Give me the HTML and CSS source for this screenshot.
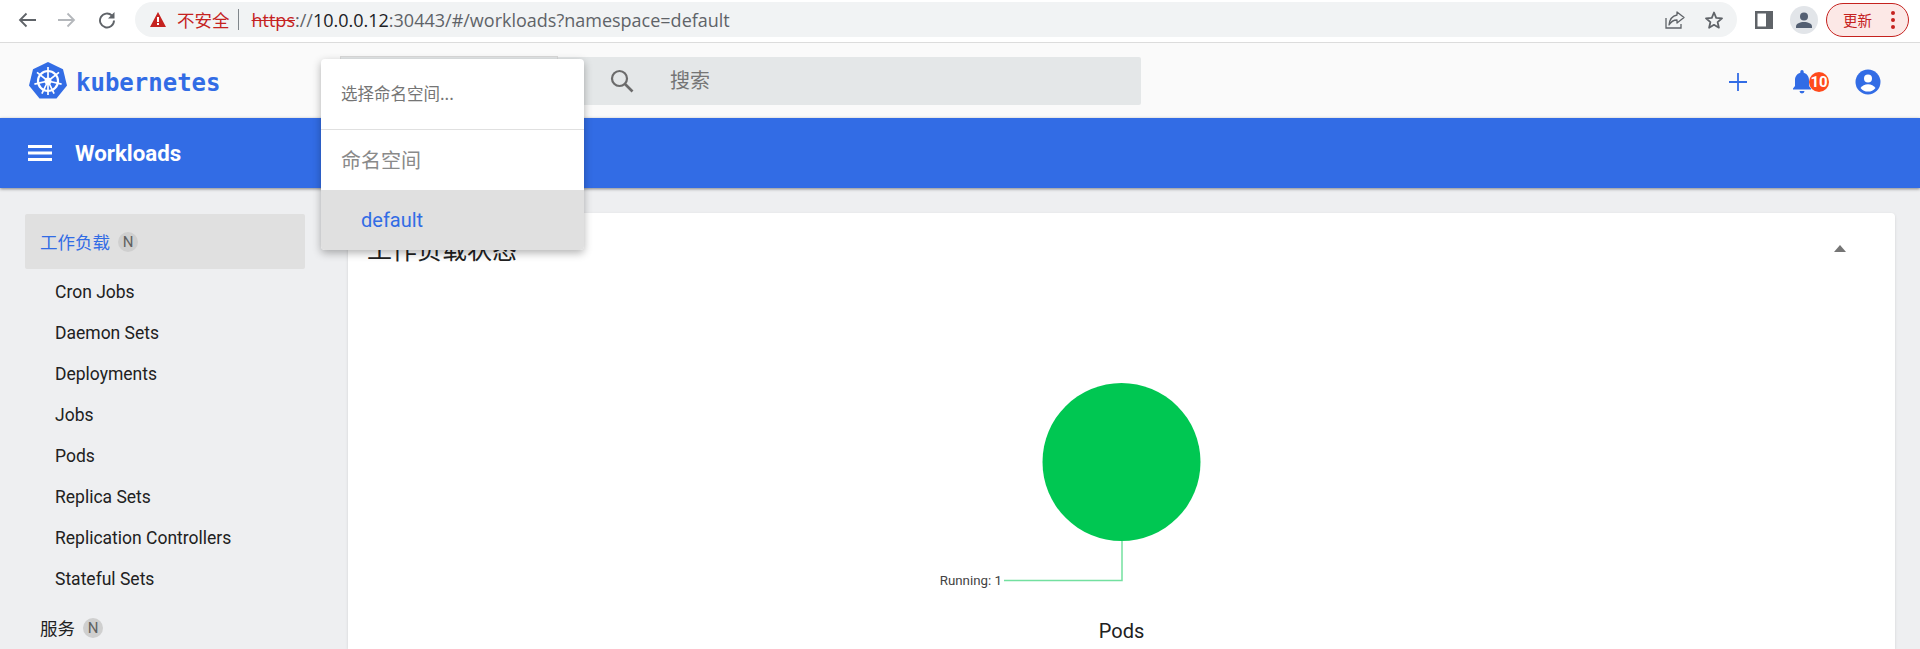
FILE: index.html
```html
<!DOCTYPE html>
<html lang="zh">
<head>
<meta charset="utf-8">
<title>Workloads - Kubernetes Dashboard</title>
<link rel="stylesheet" href="styles.css">
</head>
<body>
<div class="chrome">
  <div class="nav-buttons">
    <span class="nav-btn"><svg width="20" height="18" viewBox="0 0 20 18"><path d="M19 9H3M9.500 2.500 3 9l6.500 6.500" fill="none" stroke="#5f6368" stroke-width="1.800"/></svg></span>
    <span class="nav-btn"><svg width="20" height="18" viewBox="0 0 20 18"><path d="M1 9h16M10.500 2.500 17 9l-6.500 6.500" fill="none" stroke="#b4b7bb" stroke-width="1.800"/></svg></span>
    <span class="nav-btn"><svg width="20" height="18" viewBox="0 0 20 18"><path d="M17 9.500a7 7 0 1 1-2.100-5" fill="none" stroke="#5f6368" stroke-width="1.900"/><path d="M17.500 1v6.500H11z" fill="#5f6368"/></svg></span>
  </div>
  <div class="address">
    <svg class="warn" width="16" height="15" viewBox="0 0 16 15"><path d="M8 0 16 15H0z" fill="#c5221f"/><path d="M7 5h2v5H7zM7 11h2v2H7z" fill="#fff"/></svg>
    <span class="insecure">不安全</span>
    <span class="sep"></span>
    <span class="url"><span class="scheme">https</span><span class="dim">://</span><span class="host">10.0.0.12</span><span class="dim">:30443/#/workloads?namespace=default</span></span>
    <span class="address-icons">
      <svg width="20" height="18" viewBox="0 0 20 18"><path d="M1 7v10h15v-4" fill="none" stroke="#5f6368" stroke-width="1.300"/><path d="M12 1l7 5.500-7 5.500V9C8 9 6 10.500 4 14c.5-5 3-9 8-10z" fill="none" stroke="#5f6368" stroke-width="1.300" stroke-linejoin="round"/></svg>
      <svg width="18" height="18" viewBox="0 0 18 18"><path d="M9 1.500 11.200 6.800 17 7.300 12.600 11.100 13.900 16.700 9 13.800 4.100 16.700 5.400 11.100 1 7.300 6.800 6.800z" fill="none" stroke="#5f6368" stroke-width="1.800" stroke-linejoin="round"/></svg>
    </span>
  </div>
  <div class="chrome-actions">
    <svg class="panel-icon" width="18" height="18" viewBox="0 0 18 18"><path d="M0 0h18v18H0z" fill="#5f6368"/><path d="M2.500 2.500h8.500v13H2.500z" fill="#fff"/></svg>
    <span class="avatar"><svg width="16" height="16" viewBox="0 0 16 16"><circle cx="8" cy="4.500" r="4" fill="#535f72"/><path d="M0 16v-1.500C0 11.500 4 10 8 10s8 1.500 8 4.500V16z" fill="#535f72"/></svg></span>
    <span class="update"><span class="update-label">更新</span><span class="dots"><i></i><i></i><i></i></span></span>
  </div>
</div>

<header class="topbar">
  <div class="brand">
    <svg width="38" height="37" viewBox="0 0 38 37">
      <path d="M19 0 34 7.300 38 23.500 27.500 36.500H10.500L0 23.500 4 7.300z" fill="#326ce5"/>
      <g fill="none" stroke="#fff">
        <circle cx="19" cy="19" r="10" stroke-width="2.200"/>
        <circle cx="19" cy="19" r="2.600" stroke-width="1.800"/>
        <path d="M19 5V33M19 19 30 10.300M19 19 32.600 22.100M19 19 25.100 31.600M19 19 12.900 31.600M19 19 5.400 22.100M19 19 8 10.300" stroke-width="1.700"/>
      </g>
    </svg>
    <span class="brand-name">kubernetes</span>
  </div>
  <div class="ns-select"></div>
  <div class="search">
    <svg width="24" height="24" viewBox="0 0 24 24"><circle cx="9.500" cy="9.500" r="7.500" fill="none" stroke="#6b6b6b" stroke-width="2.200"/><path d="M15 15l7.500 7.500" stroke="#6b6b6b" stroke-width="2.600"/></svg>
    <span class="search-text">搜索</span>
  </div>
  <div class="top-actions">
    <span class="icon-btn icon-add"><svg width="18" height="18" viewBox="0 0 18 18"><path d="M9 0v18M0 9h18" stroke="#326ce5" stroke-width="1.800"/></svg></span>
    <span class="icon-btn"><svg width="18" height="24" viewBox="0 0 18 24"><path d="M9 0a1.700 1.700 0 0 1 1.700 1.700v1C14 3.500 16 6.500 16 10v6l2 2.500v1H0v-1L2 16v-6c0-3.500 2-6.500 5.300-7.300v-1A1.700 1.700 0 0 1 9 0zM6.500 21h5a2.500 2.500 0 0 1-5 0z" fill="#326ce5"/></svg><span class="badge">10</span></span>
    <span class="icon-btn"><svg width="26" height="26" viewBox="0 0 26 26"><circle cx="13" cy="13" r="12.500" fill="#326ce5"/><circle cx="13" cy="9.500" r="4" fill="#fff"/><path d="M5.500 19c1.500-2.500 4.500-3.800 7.500-3.800s6 1.300 7.500 3.800a9.600 9.600 0 0 1-15 0z" fill="#fff"/></svg></span>
  </div>
</header>

<div class="titlebar">
  <svg width="24" height="16" viewBox="0 0 24 16"><path d="M0 0h24v3H0zM0 6.500h24v3H0zM0 13h24v3H0z" fill="#fff"/></svg>
  <span class="page-title">Workloads</span>
</div>

<div class="main">
  <nav class="sidebar">
    <div class="group group-active"><span>工作负载</span><span class="n-badge">N</span></div>
    <a class="item item-first">Cron Jobs</a>
    <a class="item">Daemon Sets</a>
    <a class="item">Deployments</a>
    <a class="item">Jobs</a>
    <a class="item">Pods</a>
    <a class="item">Replica Sets</a>
    <a class="item">Replication Controllers</a>
    <a class="item">Stateful Sets</a>
    <div class="group group-next"><span>服务</span><span class="n-badge">N</span></div>
  </nav>
  <section class="card">
    <div class="card-head">
      <h2 class="card-title">工作负载状态</h2>
      <span class="caret"></span>
    </div>
    <div class="chart">
      <svg width="400" height="230" viewBox="0 0 400 230">
        <circle cx="199.500" cy="80" r="79" fill="#00c752"/>
        <path d="M200 159V198.500H82" fill="none" stroke="#00c752" stroke-opacity=".55" stroke-width="1.500"/>
        <text class="chart-label" x="80" y="203" text-anchor="end">Running: 1</text>
      </svg>
      <div class="chart-name">Pods</div>
    </div>
  </section>
</div>

<div class="ns-menu">
  <div class="ns-filter">选择命名空间...</div>
  <div class="ns-heading">命名空间</div>
  <div class="ns-option">default</div>
</div>
</body>
</html>
```

FILE: styles.css
```css
* { box-sizing: border-box; }
html, body { margin: 0; height: 649px; overflow: hidden; }
body {
  position: relative;
  background: #eeeff1;
  font-family: Roboto, "Noto Sans CJK SC", sans-serif;
  color: #212121;
}

/* browser chrome */
.chrome {
  height: 43px;
  display: flex;
  align-items: flex-start;
  background: #fff;
  border-bottom: 1px solid #dcdcdc;
  padding: 2px 0 0 7px;
}
.nav-buttons { display: flex; height: 35px; align-items: center; }
.nav-btn { width: 40px; display: flex; justify-content: center; align-items: center; }
.address {
  flex: 1;
  height: 35px;
  margin-left: 8px;
  background: #f1f3f4;
  border-radius: 18px;
  display: flex;
  align-items: center;
  padding-left: 15px;
  font-size: 17px;
}
.warn { flex: none; }
.insecure { margin-left: 11px; color: #c5221f; font-family: "Noto Sans CJK SC", sans-serif; font-size: 17.500px; }
.sep { width: 1px; height: 21px; background: #80868b; margin: 0 13px 0 8px; }
.url { font-family: "Open Sans", sans-serif; font-size: 18px; white-space: nowrap; color: #5f6368; }
.scheme { color: #c5221f; text-decoration: line-through; }
.host { color: #202124; }
.address-icons { margin-left: auto; display: flex; gap: 20px; align-items: center; padding-right: 14px; }
.chrome-actions { width: 183px; height: 35px; display: flex; align-items: center; padding-left: 18px; }
.panel-icon { flex: none; }
.avatar {
  margin-left: 17px;
  width: 28px; height: 28px;
  border-radius: 50%;
  background: #e2e5e9;
  display: flex; align-items: center; justify-content: center;
}
.update {
  margin-left: 8px;
  width: 83px; height: 34px;
  border-radius: 17px;
  border: 1px solid #c5221f;
  background: #fce8e6;
  display: flex; align-items: center;
  padding-left: 16px;
}
.update-label { color: #c5221f; font-size: 14.500px; font-family: "Noto Sans CJK SC", sans-serif; }
.dots { margin-left: 19px; display: flex; flex-direction: column; gap: 3px; }
.dots i { width: 4px; height: 4px; border-radius: 50%; background: #c5221f; display: block; }

/* header */
.topbar {
  height: 75px;
  background: #fafafa;
  display: flex;
  align-items: flex-start;
}
.brand { width: 340px; height: 75px; padding-left: 29px; display: flex; align-items: center; gap: 9px; }
.brand-name { font-family: "DejaVu Sans Mono", monospace; font-weight: 700; font-size: 24px; line-height: 28px; padding-top: 4px; color: #326ce5; }
.ns-select { width: 218px; height: 49px; margin-top: 13px; border: 1px solid #d9d9d9; background: #e4e7e8; }
.search {
  width: 583px; height: 48px; margin-top: 14px;
  background: #e4e7e8;
  display: flex; align-items: center;
  padding-left: 52px;
  border-radius: 0 2px 2px 0;
}
.search-text { margin-left: 36px; margin-bottom: 3px; font-size: 20px; color: #757575; }
.top-actions { margin-left: auto; display: flex; gap: 26px; height: 75px; align-items: center; padding: 2px 32px 0 0; }
.icon-btn { position: relative; width: 40px; height: 40px; display: flex; align-items: center; justify-content: center; }
.icon-add { padding-left: 3px; padding-top: 1px; }
.badge {
  position: absolute; left: 27px; top: 10px;
  width: 20px; height: 20px; border-radius: 50%;
  background: #ff4a1c; color: #fff;
  font-size: 15px; font-weight: 700; line-height: 20px; text-align: center;
}

/* blue title bar */
.titlebar {
  position: relative;
  height: 70px;
  background: #326ce5;
  display: flex; align-items: center;
  padding-left: 28px;
  box-shadow: 0 1px 3px rgba(0,0,0,.45);
}
.page-title { margin-left: 23px; color: #fff; font-size: 22.300px; font-weight: 700; }

/* main */
.main { display: flex; align-items: flex-start; height: 461px; overflow: hidden; padding-right: 25px; }
.sidebar { width: 348px; flex: none; padding: 26px 43px 0 25px; font-size: 17.500px; }
.group { height: 55px; flex: none; display: flex; align-items: center; padding-left: 15px; font-size: 17.500px; font-family: "Noto Sans CJK SC", sans-serif; }
.group-active { background: #e0e0e0; border-radius: 2px; color: #326ce5; }
.group-next { margin-top: 1px; }
.n-badge {
  margin-left: 8px;
  width: 20px; height: 20px; border-radius: 50%;
  background: #cfcfcf; color: #616161;
  font: 400 15px/20px Roboto, sans-serif; text-align: center;
}
.item { display: flex; align-items: center; height: 41px; padding-left: 30px; color: #212121; font-family: Roboto, sans-serif; }
.item-first { margin-top: 2px; }

.card {
  flex: 1;
  margin-top: 25px;
  height: 436px;
  overflow: hidden;
  background: #fff;
  border-radius: 4px 4px 0 0;
  box-shadow: 0 1px 3px rgba(0,0,0,.12);
}
.card-head { height: 82px; display: flex; align-items: flex-end; justify-content: space-between; padding: 0 49px 30px 19px; }
.card-title { margin: 0; font-size: 25px; font-weight: 400; line-height: 34px; font-family: "Noto Sans CJK SC", sans-serif; color: #212121; }
.caret { width: 0; height: 0; margin-bottom: 13px; border: 6px solid transparent; border-top: 0; border-bottom: 7px solid #757575; }
.chart { display: flex; flex-direction: column; align-items: center; padding-top: 87px; }
.chart svg { display: block; }
.chart-label { font-size: 13.300px; font-family: Roboto, sans-serif; fill: #424242; }
.chart-name { margin-top: 7px; font-size: 20px; line-height: 24px; color: #212121; }

/* open namespace menu */
.ns-menu {
  position: absolute; left: 321px; top: 59px;
  width: 263px; height: 191px;
  background: #fff;
  border-radius: 4px;
  box-shadow: 0 3px 8px rgba(0,0,0,.3);
  overflow: hidden;
}
.ns-filter { height: 71px; padding: 0 0 2px 20px; display: flex; align-items: center; font-size: 16.500px; color: #757575; border-bottom: 1px solid #e0e0e0; font-family: "Noto Sans CJK SC", sans-serif; }
.ns-heading { height: 60px; padding: 0 0 2px 20px; display: flex; align-items: center; font-size: 20px; color: #8a8a8a; font-family: "Noto Sans CJK SC", sans-serif; }
.ns-option { height: 60px; padding-left: 40px; display: flex; align-items: center; background: #e0e0e0; color: #326ce5; font-size: 20px; }
```
